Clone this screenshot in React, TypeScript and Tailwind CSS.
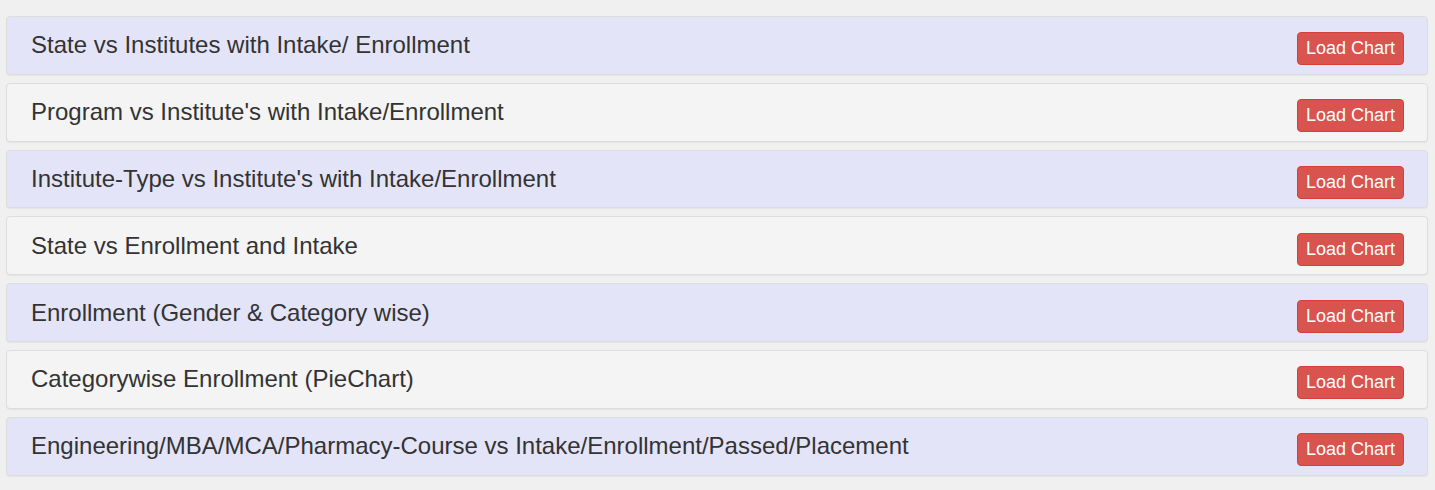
const charts = [
  "State vs Institutes with Intake/ Enrollment",
  "Program vs Institute's with Intake/Enrollment",
  "Institute-Type vs Institute's with Intake/Enrollment",
  "State vs Enrollment and Intake",
  "Enrollment (Gender & Category wise)",
  "Categorywise Enrollment (PieChart)",
  "Engineering/MBA/MCA/Pharmacy-Course vs Intake/Enrollment/Passed/Placement",
]

export default function App() {
  return (
    <div className="min-h-screen bg-[#f0f0f0] pl-[6px] pr-[7px] pt-4 font-['Liberation_Sans',Arial,sans-serif]">
      <div className="flex flex-col gap-[8px]">
        {charts.map((title, i) => (
          <div
            key={i}
            className={`flex h-[58.8px] items-center justify-between rounded-[4px] border border-[#ddd] pl-[24px] pr-[23px] shadow-[0_1px_1px_rgba(0,0,0,0.05)] ${i % 2 === 0 ? 'bg-[#e4e4f8]' : 'bg-[#f4f4f4]'}`}
          >
            <h3 className="text-[24px] leading-none text-[#333]">{title}</h3>
            <button className="mt-[7px] rounded-[4px] border border-[#d43f3a] bg-[#d9534f] px-[8px] py-[3px] text-[18px] leading-[25px] text-white">
              Load Chart
            </button>
          </div>
        ))}
      </div>
    </div>
  )
}
